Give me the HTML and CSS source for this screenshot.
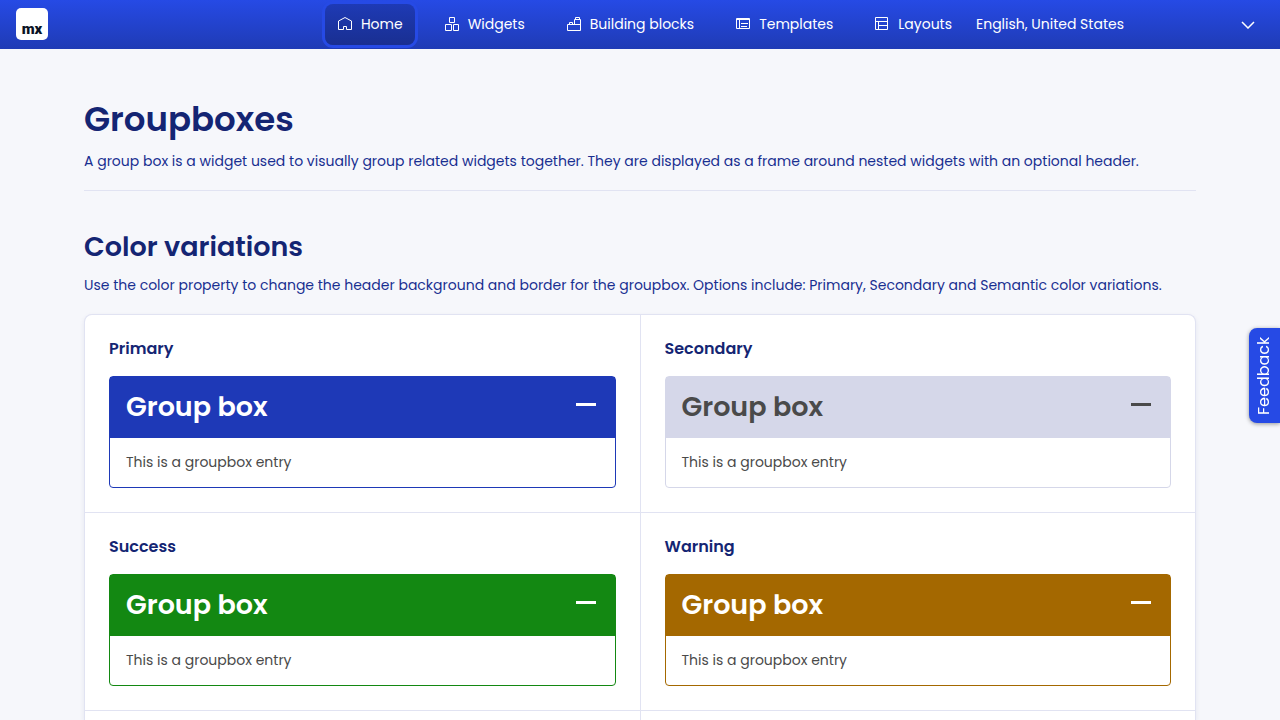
FILE: index.html
```html
<!DOCTYPE html>
<html lang="en">
<head>
<meta charset="utf-8">
<meta name="viewport" content="width=device-width, initial-scale=1">
<title>Groupboxes</title>
<link rel="stylesheet" href="styles.css">
</head>
<body>
<header class="topbar">
  <a class="logo" href="#">mx</a>
  <nav class="nav">
    <a class="nav-link active" href="#"><svg class="icon" viewBox="0 0 16 16"><path d="M1.500 5L8 1.500l6.500 3.500V13.500H9.500V10.500H6.500V13.500H1.500Z"/></svg>Home</a>
    <a class="nav-link" href="#"><svg class="icon" viewBox="0 0 16 16"><path d="M5.500 1.500h5v5h-5zM1.500 8.500h6v6h-6zM9.500 8.500h5v6h-5z"/></svg>Widgets</a>
    <a class="nav-link" href="#"><svg class="icon" viewBox="0 0 16 16"><path d="M1.500 14.500v-6h7v-5h6v11zM3.500 8V6.500h3V8M9.500 3V1.500h4V3M8 8.500h6"/></svg>Building blocks</a>
    <a class="nav-link" href="#"><svg class="icon" viewBox="0 0 16 16"><path d="M1.500 2.500h13v10h-13zM1.500 3.500h13M4.500 4v8M6 7.500h7M6 10.500h6"/></svg>Templates</a>
    <a class="nav-link" href="#"><svg class="icon" viewBox="0 0 16 16"><path d="M1.500 1.500h12v12h-12zM1.500 5.500h12M4.500 5.500v8M4.500 9.500h9"/></svg>Layouts</a>
  </nav>
  <div class="language">
    <select class="language-select" aria-label="Language"><option>English, United States</option></select>
    <svg class="chevron" viewBox="0 0 14 8"><path d="M1 1l6 6 6-6"/></svg>
  </div>
</header>
<main class="content">
  <section class="intro">
    <h1 class="page-title">Groupboxes</h1>
    <p class="lead">A group box is a widget used to visually group related widgets together. They are displayed as a frame around nested widgets with an optional header.</p>
  </section>
  <h2 class="section-title">Color variations</h2>
  <p class="lead">Use the color property to change the header background and border for the groupbox. Options include: Primary, Secondary and Semantic color variations.</p>
  <div class="card">
    <section class="cell">
      <h3 class="cell-title">Primary</h3>
      <div class="groupbox primary">
        <button class="groupbox-header" type="button">Group box<span class="minus"></span></button>
        <p class="groupbox-body">This is a groupbox entry</p>
      </div>
    </section>
    <section class="cell">
      <h3 class="cell-title">Secondary</h3>
      <div class="groupbox secondary">
        <button class="groupbox-header" type="button">Group box<span class="minus"></span></button>
        <p class="groupbox-body">This is a groupbox entry</p>
      </div>
    </section>
    <section class="cell">
      <h3 class="cell-title">Success</h3>
      <div class="groupbox success">
        <button class="groupbox-header" type="button">Group box<span class="minus"></span></button>
        <p class="groupbox-body">This is a groupbox entry</p>
      </div>
    </section>
    <section class="cell">
      <h3 class="cell-title">Warning</h3>
      <div class="groupbox warning">
        <button class="groupbox-header" type="button">Group box<span class="minus"></span></button>
        <p class="groupbox-body">This is a groupbox entry</p>
      </div>
    </section>
    <div class="cell-empty"></div>
    <div class="cell-empty"></div>
  </div>
</main>
<button class="feedback" type="button">Feedback</button>
</body>
</html>
```
FILE: styles.css
```css
* { box-sizing: border-box; }
body {
  margin: 0;
  min-height: 100vh;
  display: flex;
  flex-direction: column;
  background: #f6f7fb;
  color: #4a4a4a;
  font: 14px/20px Poppins, Inter, sans-serif;
}
h1, h2, h3, p { margin: 0; }
button, select { font: inherit; color: inherit; }

.topbar {
  display: grid;
  grid-template-columns: 1fr auto 316px;
  align-items: center;
  height: 49px;
  padding: 0 0 1px 16px;
  background: linear-gradient(#264ae5, #1f3bb5);
  color: #fff;
}
.logo {
  width: 32px;
  height: 32px;
  padding-top: 11px;
  border-radius: 5px;
  background: #fff;
  color: #0a1325;
  font-family: Roboto, sans-serif;
  font-size: 15px;
  font-weight: 900;
  line-height: 20px;
  text-align: center;
  text-decoration: none;
}
.nav { display: flex; gap: 17px; }
.nav-link {
  display: flex;
  align-items: center;
  gap: 8px;
  height: 41px;
  padding: 0 12px;
  border-radius: 8px;
  color: #fff;
  text-decoration: none;
}
.active {
  background: linear-gradient(#1e3ab5, #192f91);
  box-shadow: 0 0 0 3px #264ae5;
}
.icon { width: 16px; height: 16px; fill: none; stroke: #fff; }
.language { display: grid; align-items: center; }
.language > * { grid-area: 1 / 1; }
.language-select {
  width: 100%;
  height: 40px;
  padding: 0 48px 0 12px;
  border: 0;
  background: transparent;
  appearance: none;
}
.chevron {
  justify-self: end;
  width: 14px;
  height: 8px;
  margin: 2px 25px 0 0;
  fill: none;
  stroke: #fff;
  stroke-width: 1.500;
  pointer-events: none;
}

.content {
  flex: 1;
  display: flex;
  flex-direction: column;
  padding: 48px 84px 0;
}
.intro {
  padding-bottom: 19px;
  margin-bottom: 38px;
  border-bottom: 1px solid #e1e3f2;
}
.page-title {
  margin-bottom: 10px;
  color: #142573;
  font-size: 34px;
  font-weight: 600;
  line-height: 44px;
}
.section-title {
  margin-bottom: 10px;
  color: #142573;
  font-size: 27px;
  font-weight: 600;
  line-height: 36px;
}
.lead { color: #192f91; }
.card {
  flex: 1;
  display: grid;
  grid-template-columns: 1fr 1fr;
  grid-template-rows: auto auto 1fr;
  gap: 1px;
  margin-top: 19px;
  border: 1px solid #e1e3f2;
  border-bottom: 0;
  border-radius: 8px 8px 0 0;
  background: #e1e3f2;
  box-shadow: 0 2px 5px rgba(20, 37, 115, 0.08);
  overflow: hidden;
}
.cell { padding: 24px; background: #fff; }
.cell-empty { background: #fff; }
.cell-title {
  margin-bottom: 17px;
  color: #142573;
  font-size: 16px;
  font-weight: 600;
  line-height: 20px;
}
.groupbox { border: 1px solid var(--tone); border-radius: 4px; }
.groupbox-header {
  display: flex;
  justify-content: space-between;
  width: 100%;
  padding: 12px 19px 13px 16px;
  border: 0;
  background: var(--tone);
  color: var(--ink);
  font-size: 27px;
  font-weight: 600;
  line-height: 36px;
}
.minus { width: 20px; height: 3px; margin-top: 14px; background: var(--ink); }
.groupbox-body { padding: 14px 16px 15px; }
.primary { --tone: #1e39b7; --ink: #fff; }
.secondary { --tone: #d5d7e9; --ink: #4a4a4a; }
.success { --tone: #138812; --ink: #fff; }
.warning { --tone: #a46800; --ink: #fff; }

.feedback {
  position: fixed;
  top: 328px;
  right: 0;
  width: 31px;
  height: 95px;
  padding: 0;
  border: 0;
  border-radius: 0 8px 8px 0;
  background: #264ae5;
  box-shadow: 0 -1px 4px rgba(0, 0, 0, 0.4);
  color: #fff;
  font-size: 16px;
  writing-mode: vertical-rl;
  transform: rotate(180deg);
}
```
